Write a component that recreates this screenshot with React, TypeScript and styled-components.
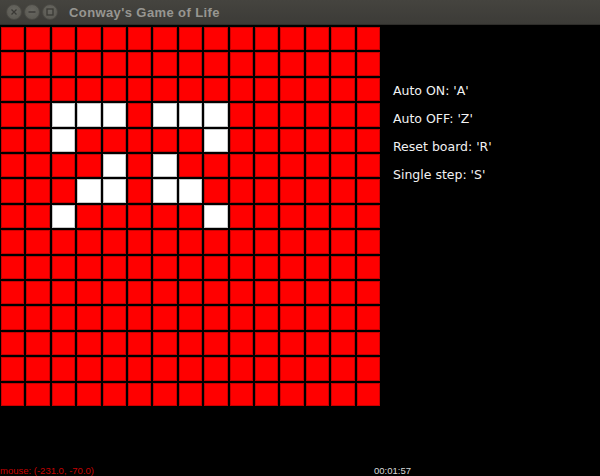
import React from "react";
import styled, { createGlobalStyle } from "styled-components";

const Global = createGlobalStyle`
  html, body { margin: 0; padding: 0; background: #000; }
  body { width: 600px; height: 476px; overflow: hidden; }
`;

const Window = styled.div`
  width: 600px;
  height: 476px;
  overflow: hidden;
  background: #000;
  display: flex;
  flex-direction: column;
`;

const TitleBar = styled.div`
  height: 25px;
  flex: none;
  display: flex;
  align-items: center;
  gap: 2px;
  padding-left: 6px;
  box-sizing: border-box;
  background: linear-gradient(#45443f, #3c3b37);
  border-bottom: 1px solid #2e2d2a;
`;

const WinButton = styled.div`
  width: 16px;
  height: 16px;
  border-radius: 50%;
  box-sizing: border-box;
  background: radial-gradient(circle at 50% 40%, #696862, #57564f);
  border: 1px solid #4a4944;
  display: flex;
  align-items: center;
  justify-content: center;
`;

const Title = styled.div`
  margin-left: 9px;
  font-family: "Liberation Sans", Arial, sans-serif;
  font-weight: bold;
  font-size: 13px;
  color: #979691;
  letter-spacing: 0.4px;
`;

const Main = styled.div`
  display: flex;
  padding: 2px 0 0 1px;
`;

const Board = styled.div`
  width: 379px;
  height: 379px;
  display: grid;
  grid-template-columns: repeat(15, 1fr);
  grid-template-rows: repeat(15, 1fr);
  gap: 2px;
`;

const Cell = styled.div<{ $alive: boolean }>`
  background: ${(p) => (p.$alive ? "#ffffff" : "#ff0000")};
  box-shadow: inset 0 0 0 1px ${(p) => (p.$alive ? "#c8c8c8" : "#c80000")};
`;

const Help = styled.div`
  display: flex;
  flex-direction: column;
  padding: 50px 0 0 13px;
`;

const HelpLine = styled.div`
  font-family: "DejaVu Sans", sans-serif;
  font-size: 12.5px;
  line-height: 28px;
  color: #f2f2f2;
  white-space: pre;
`;

const Footer = styled.div`
  margin-top: auto;
  display: grid;
  grid-template-columns: 374px auto;
  height: 11px;
  font-family: "Liberation Sans", Arial, sans-serif;
  font-size: 9.5px;
  line-height: 12px;
`;

const Status = styled.span<{ $tone: "red" | "gray" }>`
  color: ${(p) => (p.$tone === "red" ? "#c40000" : "#d8d8d8")};
  white-space: pre;
`;

const alive = new Set<string>([
  "3,2", "3,3", "3,4", "3,6", "3,7", "3,8",
  "4,2", "4,8",
  "5,4", "5,6",
  "6,3", "6,4", "6,6", "6,7",
  "7,2", "7,8",
]);

const Glyph = ({ kind }: { kind: "close" | "min" | "max" }) => (
  <svg width="8" height="8" viewBox="0 0 8 8">
    {kind === "close" && (
      <path d="M1.5 1.5 L6.5 6.5 M6.5 1.5 L1.5 6.5" stroke="#3a3935" strokeWidth="1.3" />
    )}
    {kind === "min" && <path d="M0.5 4 H7.5" stroke="#3a3935" strokeWidth="1.4" />}
    {kind === "max" && (
      <rect x="1" y="1" width="6" height="6" fill="none" stroke="#3a3935" strokeWidth="1.3" />
    )}
  </svg>
);

export default function App() {
  const cells = [];
  for (let r = 0; r < 15; r++) {
    for (let c = 0; c < 15; c++) {
      cells.push(<Cell key={`${r}-${c}`} $alive={alive.has(`${r},${c}`)} />);
    }
  }
  return (
    <>
      <Global />
      <Window>
        <TitleBar>
          <WinButton><Glyph kind="close" /></WinButton>
          <WinButton><Glyph kind="min" /></WinButton>
          <WinButton><Glyph kind="max" /></WinButton>
          <Title>Conway's Game of Life</Title>
        </TitleBar>
        <Main>
          <Board>{cells}</Board>
          <Help>
            <HelpLine>Auto ON: 'A'</HelpLine>
            <HelpLine>Auto OFF: 'Z'</HelpLine>
            <HelpLine>Reset board: 'R'</HelpLine>
            <HelpLine>Single step: 'S'</HelpLine>
          </Help>
        </Main>
        <Footer>
          <Status $tone="red">mouse: (-231.0, -70.0)</Status>
          <Status $tone="gray">00:01:57</Status>
        </Footer>
      </Window>
    </>
  );
}
